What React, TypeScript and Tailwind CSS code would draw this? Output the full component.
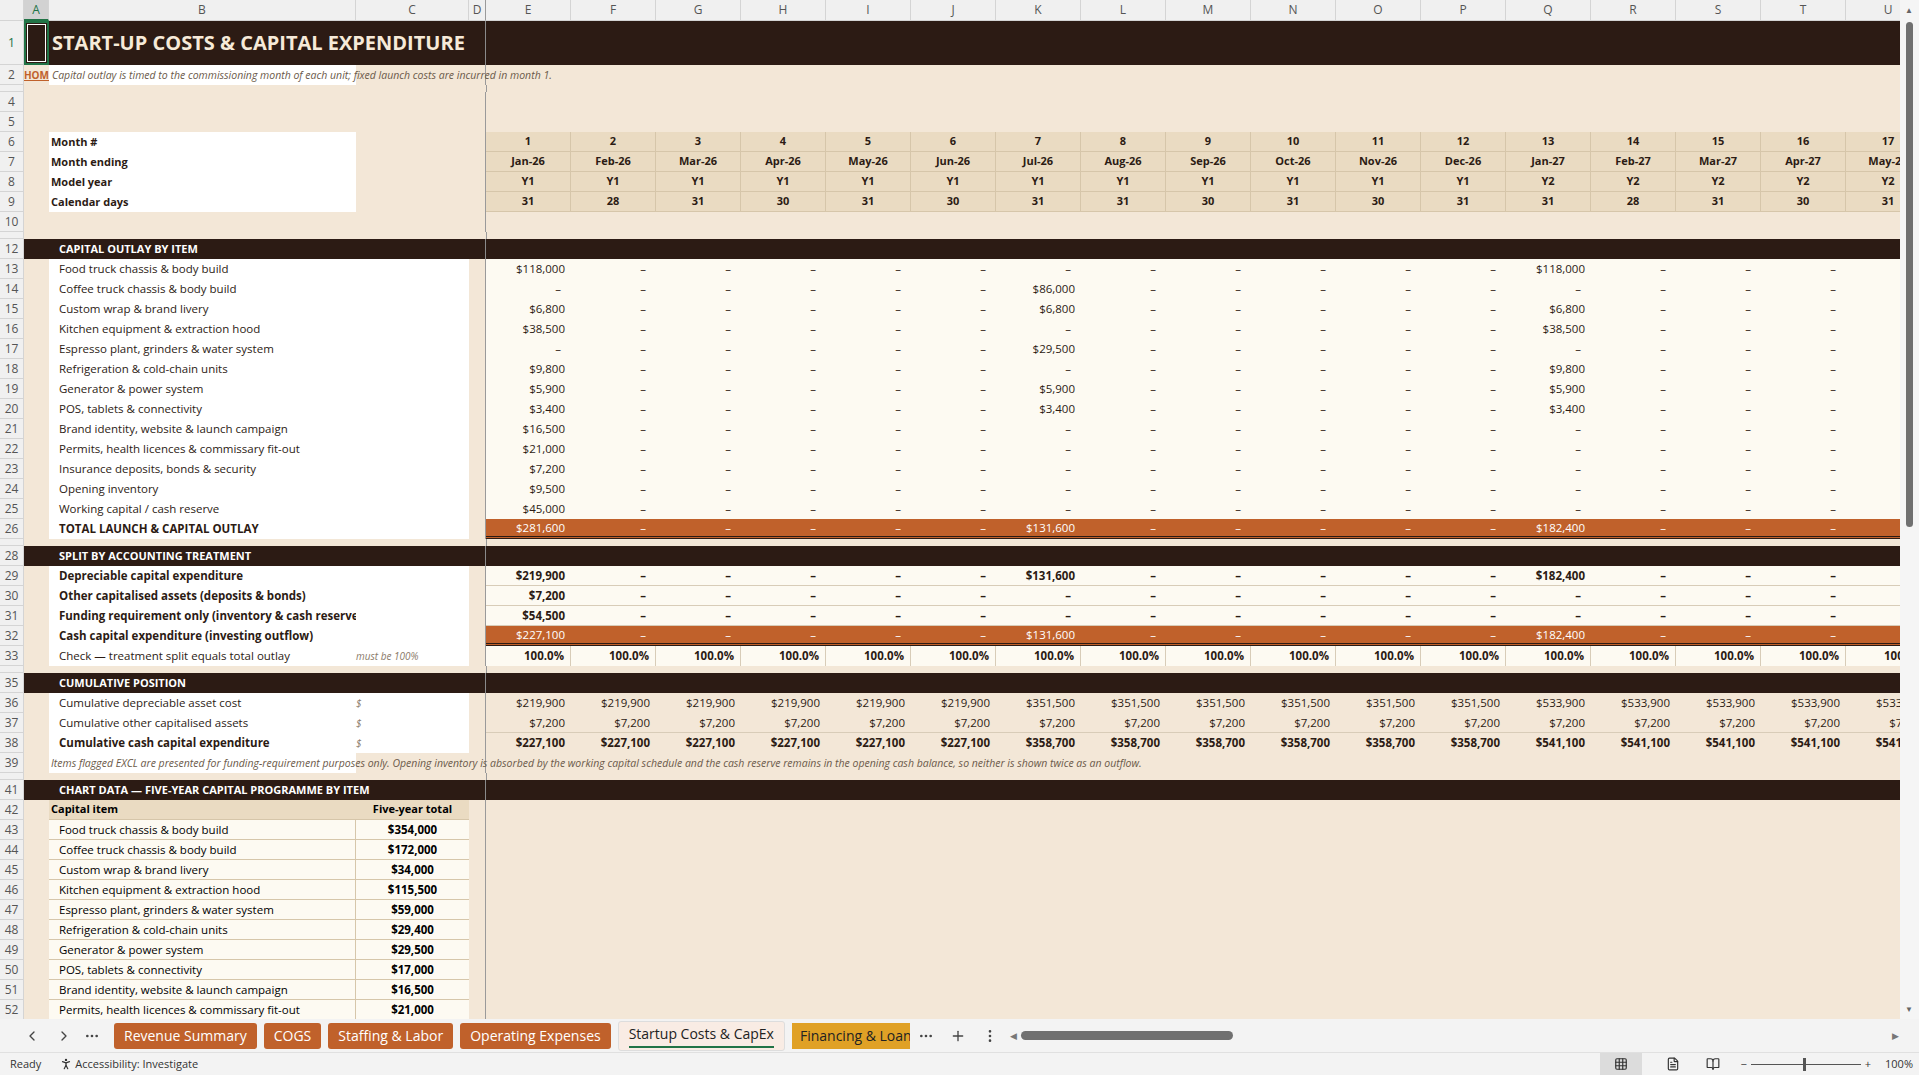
import { ChevronLeft, ChevronRight, MoreHorizontal, MoreVertical, Plus, Grid3x3, FileText, BookOpen, PersonStanding } from "lucide-react";

const FONT = { fontFamily: '"Liberation Sans Narrow", "Open Sans", "Liberation Sans", sans-serif' };
const LETTERS = ["E", "F", "G", "H", "I", "J", "K", "L", "M", "N", "O", "P", "Q", "R", "S", "T", "U"];
const MONTHS = ["Jan-26", "Feb-26", "Mar-26", "Apr-26", "May-26", "Jun-26", "Jul-26", "Aug-26", "Sep-26", "Oct-26", "Nov-26", "Dec-26", "Jan-27", "Feb-27", "Mar-27", "Apr-27", "May-27"];
const DAYS = [31, 28, 31, 30, 31, 30, 31, 31, 30, 31, 30, 31, 31, 28, 31, 30, 31];

const sparse = (e: string, k: string, q: string) => LETTERS.map((_, i) => (i === 0 ? e : i === 6 ? k : i === 12 ? q : "–"));

const OUTLAY: [number, string, string, string, string][] = [
  [13, "Food truck chassis & body build", "$118,000", "–", "$118,000"],
  [14, "Coffee truck chassis & body build", "–", "$86,000", "–"],
  [15, "Custom wrap & brand livery", "$6,800", "$6,800", "$6,800"],
  [16, "Kitchen equipment & extraction hood", "$38,500", "–", "$38,500"],
  [17, "Espresso plant, grinders & water system", "–", "$29,500", "–"],
  [18, "Refrigeration & cold-chain units", "$9,800", "–", "$9,800"],
  [19, "Generator & power system", "$5,900", "$5,900", "$5,900"],
  [20, "POS, tablets & connectivity", "$3,400", "$3,400", "$3,400"],
  [21, "Brand identity, website & launch campaign", "$16,500", "–", "–"],
  [22, "Permits, health licences & commissary fit-out", "$21,000", "–", "–"],
  [23, "Insurance deposits, bonds & security", "$7,200", "–", "–"],
  [24, "Opening inventory", "$9,500", "–", "–"],
  [25, "Working capital / cash reserve", "$45,000", "–", "–"],
];

const CHART: [string, string][] = [
  ["Food truck chassis & body build", "$354,000"],
  ["Coffee truck chassis & body build", "$172,000"],
  ["Custom wrap & brand livery", "$34,000"],
  ["Kitchen equipment & extraction hood", "$115,500"],
  ["Espresso plant, grinders & water system", "$59,000"],
  ["Refrigeration & cold-chain units", "$29,400"],
  ["Generator & power system", "$29,500"],
  ["POS, tablets & connectivity", "$17,000"],
  ["Brand identity, website & launch campaign", "$16,500"],
  ["Permits, health licences & commissary fit-out", "$21,000"],
];

const cum = (a: string, b: string, c: string) => LETTERS.map((_, i) => (i < 6 ? a : i < 12 ? b : c));

function RowNum({ n, h = "h-[20px]", active = false }: { n?: number; h?: string; active?: boolean }) {
  return (
    <div className={`${h} w-[24px] shrink-0 border-b border-r border-[#d4d4d4] bg-[#f0f0f0] flex items-center justify-center text-[12px] overflow-hidden ${active ? "text-[#217346]" : "text-[#555]"}`}>
      {n}
    </div>
  );
}

function Gap() {
  return (
    <div className="flex h-[7px]">
      <RowNum h="h-[7px]" />
      <div className="w-[462px] shrink-0" />
      <div className="w-0 border-l border-[#9a9a9a]" />
    </div>
  );
}

function Band({ n, title }: { n: number; title: string }) {
  return (
    <div className="flex h-[20px]">
      <RowNum n={n} />
      <div className="flex-1 flex items-center bg-[#2c1b14] text-white text-[11px] font-bold uppercase">
        <div className="w-[462px] shrink-0 border-r border-[#8a8a8a] h-full flex items-center pl-[35px]">{title}</div>
      </div>
    </div>
  );
}

function Line({ n, label, bold, c, cWhite = true, values, valueBg = "bg-[#fdfaf2]", valueText = "text-[#2c1b14]", borderB = "", cells = "", labelBg = "bg-white" }: {
  n: number; label: string; bold?: boolean; c?: React.ReactNode; cWhite?: boolean; values: string[]; valueBg?: string; valueText?: string; borderB?: string; cells?: string; labelBg?: string;
}) {
  return (
    <div className="flex h-[20px]">
      <RowNum n={n} />
      <div className="w-[25px] shrink-0" />
      <div className={`w-[307px] shrink-0 ${labelBg} flex items-center pl-[10px] text-[11.5px] ${bold ? "font-bold" : ""} text-[#2c1b14] whitespace-nowrap`}>{label}</div>
      <div className={`w-[113px] shrink-0 ${cWhite ? "bg-white" : ""} flex items-center text-[10px] italic text-[#8a7a6a]`}>{c}</div>
      <div className="w-[17px] shrink-0 border-r border-[#9a9a9a]" />
      {values.map((v, i) => (
        <div key={i} className={`w-[85px] shrink-0 ${valueBg} ${valueText} ${borderB} ${cells} flex items-center justify-end pr-[6px] text-[11.5px] whitespace-nowrap`}>
          <span className={v === "–" ? "mr-[4px]" : ""}>{v}</span>
        </div>
      ))}
    </div>
  );
}

function HeadRow({ n, label, values }: { n: number; label: string; values: (string | number)[] }) {
  return (
    <div className="flex h-[20px]">
      <RowNum n={n} />
      <div className="w-[25px] shrink-0" />
      <div className="w-[307px] shrink-0 bg-white flex items-center pl-[2px] text-[11px] font-bold text-[#2c1b14]">{label}</div>
      <div className="w-[130px] shrink-0 border-r border-[#9a9a9a]" />
      {values.map((v, i) => (
        <div key={i} className="w-[85px] shrink-0 bg-[#eadbc2] border-r border-b border-[#d6c6aa] flex items-center justify-center text-[11px] font-bold text-[#2c1b14]">{v}</div>
      ))}
    </div>
  );
}

function EmptyRow({ n }: { n: number }) {
  return (
    <div className="flex h-[20px]">
      <RowNum n={n} />
      <div className="w-[462px] shrink-0 border-r border-[#9a9a9a]" />
    </div>
  );
}

export default function App() {
  const tabs = ["Revenue Summary", "COGS", "Staffing & Labor", "Operating Expenses"];
  return (
    <div className="w-[1919px] h-[1075px] overflow-hidden bg-[#f3e7d7] flex flex-col" style={FONT}>
      <div className="flex flex-1 min-h-0">
        <div className="w-[1900px] overflow-hidden">
          {/* column headers */}
          <div className="flex h-[21px] bg-[#f0f0f0] text-[12px] text-[#555]">
            <div className="w-[24px] shrink-0 border-r border-b border-[#d4d4d4]" />
            <div className="w-[25px] shrink-0 border-r border-b-2 border-b-[#217346] border-[#d4d4d4] bg-[#d2d2d2] text-[#217346] flex items-center justify-center">A</div>
            <div className="w-[307px] shrink-0 border-r border-b border-[#d4d4d4] flex items-center justify-center">B</div>
            <div className="w-[113px] shrink-0 border-r border-b border-[#d4d4d4] flex items-center justify-center">C</div>
            <div className="w-[17px] shrink-0 border-r border-b border-r-[#9a9a9a] border-b-[#d4d4d4] flex items-center justify-center">D</div>
            {LETTERS.map((l) => (
              <div key={l} className="w-[85px] shrink-0 border-r border-b border-[#d4d4d4] flex items-center justify-center">{l}</div>
            ))}
          </div>
          {/* row 1 */}
          <div className="flex h-[44px]">
            <RowNum n={1} h="h-[44px]" active />
            <div className="flex-1 bg-[#2c1b14] flex items-center">
              <div className="w-[25px] h-full border-2 border-[#217346] outline outline-1 outline-white -outline-offset-4 shrink-0" />
              <div className="w-[437px] h-full shrink-0 border-r border-[#8a8a8a] flex items-center pl-[3px] text-[20px] font-bold text-[#f6ead8] whitespace-nowrap">START-UP COSTS &amp; CAPITAL EXPENDITURE</div>
            </div>
          </div>
          {/* row 2 */}
          <div className="flex h-[20px] relative">
            <RowNum n={2} />
            <div className="w-[25px] shrink-0 flex items-center text-[10px] font-bold text-[#c0612b] underline overflow-hidden whitespace-nowrap justify-end">HOM</div>
            <div className="w-[307px] shrink-0 bg-white" />
            <div className="w-[130px] shrink-0 border-r border-[#9a9a9a]" />
            <div className="absolute left-[52px] top-[3px] text-[10.5px] italic text-[#6b5a4a] whitespace-nowrap">Capital outlay is timed to the commissioning month of each unit; fixed launch costs are incurred in month 1.</div>
          </div>
          <Gap />
          <EmptyRow n={4} />
          <EmptyRow n={5} />
          <HeadRow n={6} label="Month #" values={LETTERS.map((_, i) => i + 1)} />
          <HeadRow n={7} label="Month ending" values={MONTHS} />
          <HeadRow n={8} label="Model year" values={LETTERS.map((_, i) => (i < 12 ? "Y1" : "Y2"))} />
          <HeadRow n={9} label="Calendar days" values={DAYS} />
          <EmptyRow n={10} />
          <Gap />
          <Band n={12} title="Capital outlay by item" />
          {OUTLAY.map(([n, l, e, k, q]) => (
            <Line key={n} n={n} label={l} values={sparse(e, k, q)} />
          ))}
          <Line n={26} label="TOTAL LAUNCH & CAPITAL OUTLAY" bold values={sparse("$281,600", "$131,600", "$182,400")} valueBg="bg-[#c0612b]" valueText="text-white" borderB="border-b-[3px] border-double border-[#2c1b14]" />
          <Gap />
          <Band n={28} title="Split by accounting treatment" />
          <Line n={29} label="Depreciable capital expenditure" bold values={sparse("$219,900", "$131,600", "$182,400")} borderB="border-b border-[#d8ccb8] font-bold" />
          <Line n={30} label="Other capitalised assets (deposits & bonds)" bold values={sparse("$7,200", "–", "–")} borderB="border-b border-[#d8ccb8] font-bold" />
          <Line n={31} label="Funding requirement only (inventory & cash reserve)" bold values={sparse("$54,500", "–", "–")} borderB="border-b border-[#d8ccb8] font-bold" />
          <Line n={32} label="Cash capital expenditure (investing outflow)" bold values={sparse("$227,100", "$131,600", "$182,400")} valueBg="bg-[#c0612b]" valueText="text-white" borderB="border-b-[3px] border-double border-[#2c1b14]" />
          <Line n={33} label="Check — treatment split equals total outlay" c={<span>must be 100%</span>} values={LETTERS.map(() => "100.0%")} cells="border-r border-[#d8ccb8] font-bold" />
          <Gap />
          <Band n={35} title="Cumulative position" />
          <Line n={36} label="Cumulative depreciable asset cost" c="$" values={cum("$219,900", "$351,500", "$533,900")} valueBg="" />
          <Line n={37} label="Cumulative other capitalised assets" c="$" values={cum("$7,200", "$7,200", "$7,200")} valueBg="" borderB="border-b border-[#d8ccb8]" />
          <Line n={38} label="Cumulative cash capital expenditure" bold c="$" values={cum("$227,100", "$358,700", "$541,100")} valueBg="" cells="font-bold" />
          <div className="flex h-[20px] relative">
            <RowNum n={39} />
            <div className="w-[25px] shrink-0" />
            <div className="w-[307px] shrink-0 bg-white" />
            <div className="w-[130px] shrink-0 border-r border-[#9a9a9a]" />
            <div className="absolute left-[51px] top-[3px] text-[10.5px] italic text-[#6b5a4a] whitespace-nowrap">Items flagged EXCL are presented for funding-requirement purposes only. Opening inventory is absorbed by the working capital schedule and the cash reserve remains in the opening cash balance, so neither is shown twice as an outflow.</div>
          </div>
          <Gap />
          <Band n={41} title="Chart data — five-year capital programme by item" />
          <div className="flex h-[20px]">
            <RowNum n={42} />
            <div className="w-[25px] shrink-0" />
            <div className="w-[307px] shrink-0 bg-[#eadbc2] border-b border-[#d6c6aa] flex items-center pl-[2px] text-[11px] font-bold">Capital item</div>
            <div className="w-[113px] shrink-0 bg-[#eadbc2] border-b border-[#d6c6aa] flex items-center justify-center text-[11px] font-bold">Five-year total</div>
            <div className="w-[17px] shrink-0 border-r border-[#9a9a9a]" />
          </div>
          {CHART.map(([l, v], i) => (
            <div key={l} className="flex h-[20px]">
              <RowNum n={43 + i} />
              <div className="w-[25px] shrink-0" />
              <div className="w-[307px] shrink-0 bg-[#fdfaf2] border-b border-r border-[#d6c6aa] flex items-center pl-[10px] text-[11.5px]">{l}</div>
              <div className="w-[113px] shrink-0 bg-[#fdfaf2] border-b border-[#d6c6aa] flex items-center justify-center text-[11.5px] font-bold">{v}</div>
              <div className="w-[17px] shrink-0 border-r border-[#9a9a9a]" />
            </div>
          ))}
        </div>
        {/* vertical scrollbar */}
        <div className="w-[19px] bg-[#f5f5f5] relative">
          <div className="absolute top-[4px] left-[5px] text-[8px] text-[#666]">▲</div>
          <div className="absolute top-[22px] left-[6px] w-[7px] h-[505px] rounded bg-[#707070]" />
          <div className="absolute bottom-[4px] left-[5px] text-[8px] text-[#666]">▼</div>
        </div>
      </div>
      {/* tabs bar */}
      <div className="h-[33px] bg-[#f3f3f3] flex items-center text-[14px] shrink-0">
        <ChevronLeft className="ml-[24px] w-4 h-4 text-[#444]" />
        <ChevronRight className="ml-[16px] w-4 h-4 text-[#444]" />
        <MoreHorizontal className="ml-[12px] w-4 h-4 text-[#444]" />
        <div className="flex items-center gap-[7px] ml-[14px]">
          {tabs.map((t) => (
            <div key={t} className="h-[26px] px-[10px] rounded-[3px] bg-[#c0612b] text-white flex items-center">{t}</div>
          ))}
          <div className="h-[30px] px-[10px] bg-[#f9ece4] border border-[#ddd] rounded-[3px] flex flex-col items-center justify-center text-[#222]">
            <span>Startup Costs &amp; CapEx</span>
            <span className="w-full h-[2px] bg-[#217346] mt-[2px]" />
          </div>
          <div className="h-[26px] w-[118px] pl-[8px] bg-[#e0a126] text-[#222] flex items-center overflow-hidden whitespace-nowrap">Financing &amp; Loan</div>
        </div>
        <MoreHorizontal className="ml-[8px] w-4 h-4 text-[#444]" />
        <Plus className="ml-[16px] w-4 h-4 text-[#444]" />
        <MoreVertical className="ml-[16px] w-4 h-4 text-[#444]" />
        <div className="ml-[12px] flex-1 h-[17px] mr-[20px] flex items-center relative">
          <span className="text-[9px] text-[#777]">◀</span>
          <div className="ml-[4px] w-[212px] h-[9px] rounded-full bg-[#707070]" />
          <span className="absolute right-0 text-[9px] text-[#777]">▶</span>
        </div>
      </div>
      {/* status bar */}
      <div className="h-[23px] bg-[#f3f3f3] border-t border-[#e0e0e0] flex items-center text-[11px] text-[#333] shrink-0">
        <span className="ml-[10px]">Ready</span>
        <PersonStanding className="ml-[18px] w-[14px] h-[14px]" />
        <span className="ml-[2px]">Accessibility: Investigate</span>
        <div className="ml-auto flex items-center h-full">
          <div className="h-full w-[42px] bg-[#dcdcdc] flex items-center justify-center"><Grid3x3 className="w-[14px] h-[14px]" /></div>
          <FileText className="ml-[24px] w-[14px] h-[14px]" />
          <BookOpen className="ml-[26px] w-[14px] h-[14px]" />
          <span className="ml-[20px]">−</span>
          <div className="ml-[4px] w-[110px] h-px bg-[#555] relative">
            <div className="absolute left-[52px] -top-[6px] w-[3px] h-[13px] bg-[#555]" />
          </div>
          <span className="ml-[4px]">+</span>
          <span className="ml-[14px] mr-[6px]">100%</span>
        </div>
      </div>
    </div>
  );
}
